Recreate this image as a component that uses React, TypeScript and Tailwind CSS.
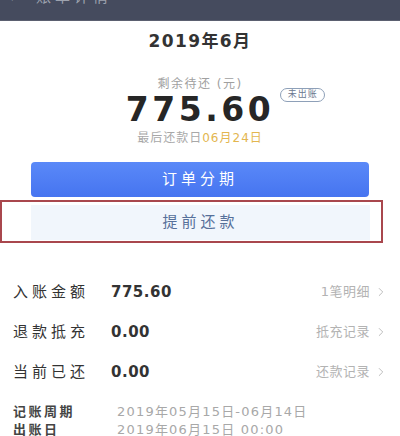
import { ChevronRight } from 'lucide-react'

const rows = [
  { label: '入账金额', value: '775.60', link: '1笔明细' },
  { label: '退款抵充', value: '0.00', link: '抵充记录' },
  { label: '当前已还', value: '0.00', link: '还款记录' },
]

export default function App() {
  return (
    <div className="w-[400px] h-[436px] overflow-hidden bg-white font-['DejaVu_Sans','Noto_Sans_CJK_SC',sans-serif]">
      {/* top bar, mostly scrolled out */}
      <div className="h-[21px] bg-[#454b5e] border-b border-[#5b6070] overflow-hidden">
        <div className="-mt-[14px] pl-[8px] flex items-center gap-[18px] text-[15px] text-[#9da2ae] tracking-[4px]">
          <span>‹</span>
          <span>账单详情</span>
        </div>
      </div>

      <div className="h-[42px] flex items-center justify-center text-[17px] font-semibold text-[#333333] tracking-[1.4px]">
        2019年6月
      </div>

      {/* amount block */}
      <div className="mt-[13px] h-[16px] flex items-center justify-center text-[12px] text-[#a0a0a0] tracking-[1.5px]">
        剩余待还 (元)
      </div>
      <div className="h-[36px] flex items-center justify-center">
        <div className="relative">
          <span className="text-[33px] leading-[36px] font-bold text-[#262626] tracking-[3.5px]">775.60</span>
          <span className="absolute left-full top-[-4px] ml-[6px] w-[45px] h-[14px] flex items-center justify-center rounded-full border border-[#8ea0b8] text-[9px] text-[#6b7890] tracking-[1px] whitespace-nowrap">
            未出账
          </span>
        </div>
      </div>
      <div className="mt-[2px] h-[16px] flex items-center justify-center text-[12px] text-[#a8a8a8] tracking-[1px]">
        最后还款日<span className="text-[#e3b64f]">06月24日</span>
      </div>

      {/* actions */}
      <div className="mt-[16px] mx-[31px] h-[35px] rounded-[4px] bg-linear-to-b from-[#5a89f8] to-[#4674f0] flex items-center justify-center text-[15px] text-white tracking-[4px]">
        订单分期
      </div>
      <div className="mt-[3px] w-[383px] border-2 border-[#a9474d] pt-[3px] pb-[1px] pl-[29px] pr-[11px]">
        <div className="h-[35px] bg-[#f1f6fc] flex items-center justify-center text-[15px] text-[#56709a] tracking-[4px]">
          提前还款
        </div>
      </div>

      {/* summary rows */}
      <div className="mt-[29px]">
        {rows.map((r) => (
          <div key={r.label} className="h-[40px] flex items-center pl-[13px] pr-[12px]">
            <span className="w-[98px] text-[15px] text-[#333333] tracking-[4px]">{r.label}</span>
            <span className="text-[15px] font-bold text-[#333333] tracking-[0.5px]">{r.value}</span>
            <span className="ml-auto flex items-center text-[13px] text-[#b3b3b3] tracking-[0.5px]">
              {r.link}
              <ChevronRight size={14} strokeWidth={1.5} className="ml-[4px]" />
            </span>
          </div>
        ))}
      </div>

      <div className="mt-[11px] pl-[13px] text-[13px]">
        <div className="h-[18px] flex items-center">
          <span className="w-[104px] font-semibold text-[#444444] tracking-[2.5px]">记账周期</span>
          <span className="text-[#a8a8a8] tracking-[1.2px]">2019年05月15日-06月14日</span>
        </div>
        <div className="h-[18px] flex items-center">
          <span className="w-[104px] font-semibold text-[#444444] tracking-[2.5px]">出账日</span>
          <span className="text-[#a8a8a8] tracking-[1.2px]">2019年06月15日 00:00</span>
        </div>
      </div>
    </div>
  )
}
